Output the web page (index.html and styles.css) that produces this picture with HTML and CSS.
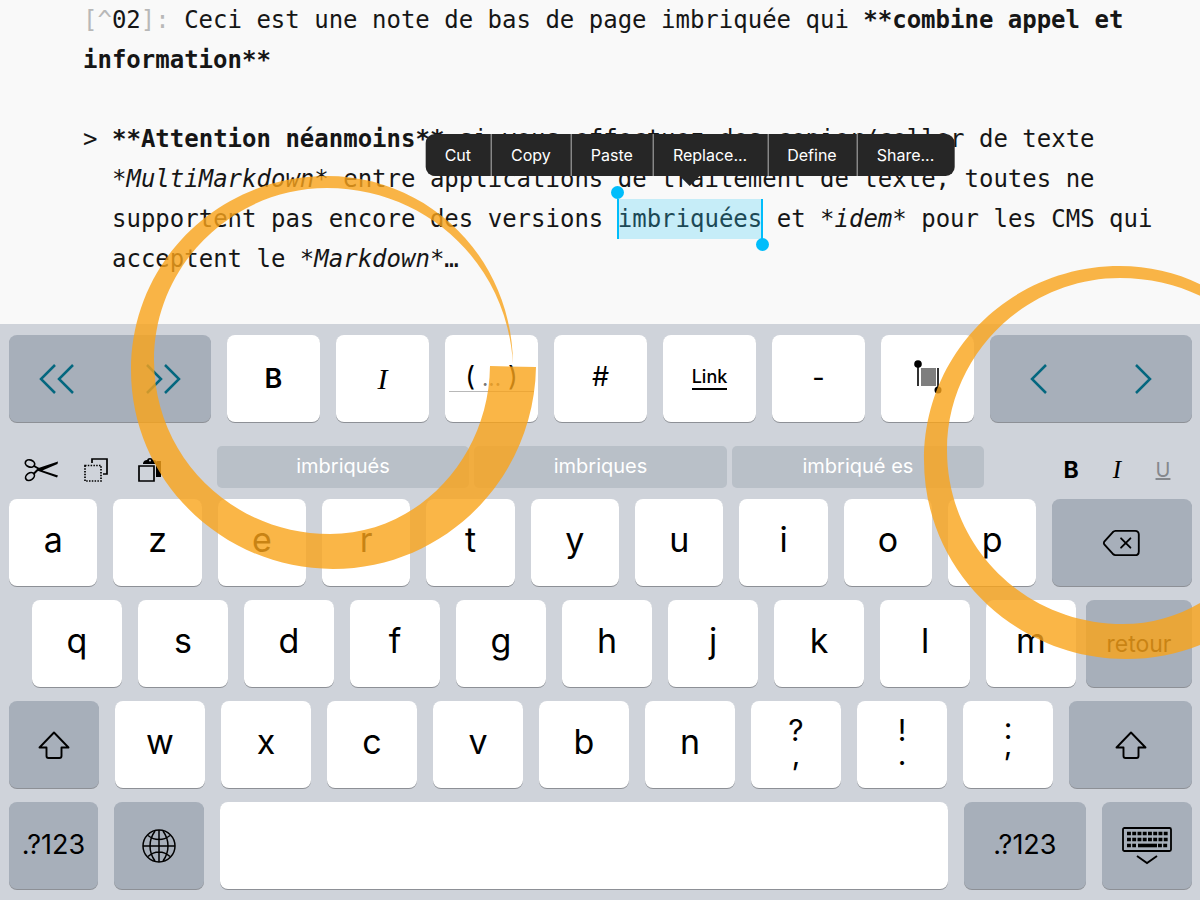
FILE: index.html
```
<!DOCTYPE html>
<html lang="fr">
<head>
<meta charset="utf-8">
<title>Éditeur Markdown</title>
<link rel="stylesheet" href="styles.css">
</head>
<body>
<main class="screen">
  <section class="editor" aria-label="Document">
    <p class="para"><span class="faint">[^</span>02<span class="faint">]:</span> Ceci est une note de bas de page imbriquée qui <strong>**combine appel et information**</strong></p>
    <div class="quote">
      <span class="mark">&gt;</span>
      <p class="para"><strong>**Attention néanmoins**</strong> si vous effectuez des copier/coller de texte <em>*MultiMarkdown*</em> entre applications de traitement de texte, toutes ne supportent pas encore des versions <span class="selection">imbriquées<span class="menu" role="toolbar"><button>Cut</button><button>Copy</button><button>Paste</button><button>Replace...</button><button>Define</button><button>Share...</button></span></span> et <em>*idem*</em> pour les CMS qui acceptent le <em>*Markdown*</em>…</p>
    </div>
  </section>

  <section class="keyboard" aria-label="Clavier">
    <div class="row row-format">
      <div class="key dark pair">
        <button aria-label="Mot précédent"><svg class="chevrons" width="36" height="32" viewBox="0 0 36 32"><path d="M16 2L2 16L16 30M34 2L20 16L34 30"/></svg></button>
        <button aria-label="Mot suivant"><svg class="chevrons" width="36" height="32" viewBox="0 0 36 32"><path d="M2 2L16 16L2 30M20 2L34 16L20 30"/></svg></button>
      </div>
      <button class="key format strong">B</button>
      <button class="key format slanted">I</button>
      <button class="key format parens"><span>(<i>...</i>)</span></button>
      <button class="key format hash">#</button>
      <button class="key format"><span class="linked">Link</span></button>
      <button class="key format">-</button>
      <button class="key" aria-label="Sélection"><svg width="30" height="36" viewBox="0 0 30 36"><path d="M5 6V28M25 10V32" stroke="#000" stroke-width="1.6"/><rect x="8" y="10" width="15" height="18" fill="#7e7e7e"/><circle cx="5" cy="6" r="3.8"/><circle cx="25" cy="32" r="3.5"/></svg></button>
      <div class="key dark pair wide">
        <button aria-label="Gauche"><svg class="chevrons" width="18" height="32" viewBox="0 0 18 32"><path d="M16 2L2 16L16 30"/></svg></button>
        <button aria-label="Droite"><svg class="chevrons" width="18" height="32" viewBox="0 0 18 32"><path d="M2 2L16 16L2 30"/></svg></button>
      </div>
    </div>

    <div class="shortcuts">
      <div class="tools tools-edit">
        <button aria-label="Couper"><svg width="36" height="24" viewBox="0 0 36 24" fill="none" stroke="#000" stroke-width="1.7"><ellipse cx="6" cy="5.5" rx="4.8" ry="3.5" transform="rotate(18 6 5.5)"/><ellipse cx="6" cy="18.5" rx="4.8" ry="3.5" transform="rotate(-35 6 18.5)"/><path d="M10 8L17 12M9.5 16L14 11.5" stroke-width="2"/><path d="M13 10.5L34 3.5L33.5 6L16 13.5ZM14 11L34 17.5L33 19.5L13 12.5Z" fill="#000" stroke="none"/></svg></button>
        <button aria-label="Copier"><svg width="26" height="26" viewBox="0 0 26 26" fill="none" stroke="#000" stroke-width="1.7"><path d="M9 6V2H24V17H20"/><path d="M2 8.5H18V24H2Z" stroke-dasharray="1.5 1.3"/></svg></button>
        <button aria-label="Coller"><svg width="26" height="26" viewBox="0 0 26 26"><path d="M6 6Q7 3 10 3Q10.500 1 13 1T16 3Q20 3 20 6V7H6ZM20 4H24V20H19V7H20Z"/><path d="M2 9H17V24H2Z" fill="none" stroke="#000" stroke-width="1.7"/><circle cx="13" cy="3.500" r="1" fill="#cfd3da"/></svg></button>
      </div>
      <div class="suggestions">
        <button>imbriqués</button><button>imbriques</button><button>imbriqué es</button>
      </div>
      <div class="tools tools-style">
        <button class="bold">B</button><button class="italic">I</button><button class="underlined">U</button>
      </div>
    </div>

    <div class="row row-top">
      <button class="key">a</button><button class="key">z</button><button class="key">e</button><button class="key">r</button><button class="key">t</button><button class="key">y</button><button class="key">u</button><button class="key">i</button><button class="key">o</button><button class="key">p</button>
      <button class="key dark icon" aria-label="Effacer"><svg width="40" height="28" viewBox="0 0 42 30" fill="none" stroke="#000" stroke-width="2" stroke-linejoin="round" stroke-linecap="round"><path d="M14 2H35Q39 2 39 6V24Q39 28 35 28H14Q12.500 28 11 26.500L2 16.500Q1 15 2 13.500L11 3.500Q12.500 2 14 2Z"/><path d="M20 10L30 20M30 10L20 20"/></svg></button>
    </div>

    <div class="home">
      <div class="row row-home">
        <button class="key">q</button><button class="key">s</button><button class="key">d</button><button class="key">f</button><button class="key">g</button><button class="key">h</button><button class="key">j</button><button class="key">k</button><button class="key">l</button><button class="key">m</button>
      </div>
      <button class="key dark label return">retour</button>
    </div>

    <div class="row row-bottom">
      <button class="key dark icon" aria-label="Majuscule"><svg width="32" height="28" viewBox="0 0 32 28" fill="none" stroke="#000" stroke-width="1.9" stroke-linejoin="round"><path d="M16 1.500L30.500 16.500H23.500V25Q23.500 27 21.500 27H10.500Q8.500 27 8.500 25V16.500H1.500Z"/></svg></button>
      <button class="key">w</button><button class="key">x</button><button class="key">c</button><button class="key">v</button><button class="key">b</button><button class="key">n</button>
      <button class="key double"><span>?</span><span>,</span></button>
      <button class="key double"><span>!</span><span>.</span></button>
      <button class="key double tight"><span>:</span><span>,</span></button>
      <button class="key dark icon" aria-label="Majuscule"><svg width="32" height="28" viewBox="0 0 32 28" fill="none" stroke="#000" stroke-width="1.9" stroke-linejoin="round"><path d="M16 1.500L30.500 16.500H23.500V25Q23.500 27 21.500 27H10.500Q8.500 27 8.500 25V16.500H1.500Z"/></svg></button>
    </div>

    <div class="row row-space">
      <button class="key dark label">.?123</button>
      <button class="key dark icon" aria-label="Langue"><svg width="34" height="34" viewBox="0 0 34 34" fill="none" stroke="#000" stroke-width="1.5"><circle cx="17" cy="17" r="16"/><path d="M17 1V33M1 17H33M13 2Q8 9 8 17T13 32M21 2Q26 9 26 17T21 32M6 6.500Q11 10.500 17 10.500T28 6.500M6 27.500Q11 23 17 23T28 27.500"/></svg></button>
      <button class="key" aria-label="Espace"></button>
      <button class="key dark label">.?123</button>
      <button class="key dark icon" aria-label="Masquer le clavier"><svg width="50" height="38" viewBox="0 0 50 38" fill="none" stroke="#000"><rect x="1" y="1" width="48" height="23" rx="1.5" stroke-width="1.8"/><path d="M5 6.500H46M5 12.500H46" stroke-width="3.6" stroke-dasharray="3.900 1.350"/><path d="M5 18.500H14M36 18.500H46" stroke-width="3.6" stroke-dasharray="3.900 1.350"/><path d="M16 18.500H35" stroke-width="3.6"/><path d="M15 29L25 36L35 29" stroke-width="1.9"/></svg></button>
    </div>
  </section>

  <svg class="rings" aria-hidden="true">
    <defs><path id="ring" d="M513 364C512 257 428 176 327 176C218 176 131 262 131 370C131 480 222 569 333 569C444 569 534 479 536 367L490 366C489 458 418 534 330 534C233 534 154 458 154 360C154 265 233 188 327 188C425 188 507 262 513 364Z"/></defs>
    <use href="#ring"/>
    <use href="#ring" x="793" y="90"/>
  </svg>
</main>
</body>
</html>
```
FILE: styles.css
```
* { box-sizing: border-box; }

body {
  margin: 0;
  background: #f9f9f9;
  color: #000;
  font-family: Inter, "Liberation Sans", sans-serif;
}

button {
  margin: 0;
  padding: 0;
  border: 0;
  background: none;
  color: inherit;
  font: inherit;
}

svg { display: block; }

.screen {
  position: relative;
  display: flex;
  flex-direction: column;
  min-height: 100vh;
  overflow: hidden;
}

/* Text area */
.editor {
  flex: 1;
  padding: 0 34px 44px 83px;
  color: #161616;
  font: 24px/40px "DejaVu Sans Mono", "Liberation Mono", monospace;
}

.para { margin: 0; }
.faint { color: #b8b8b8; }

.quote {
  display: flex;
  margin-top: 39px;
}

.mark {
  flex: none;
  width: 29px;
}

.selection {
  position: relative;
  display: inline-block;
  background: #c6edf8;
  color: #1c4956;
  box-shadow: -1px 0 #00bdfb, 1px 0 #00bdfb, inset 1px 0 #00bdfb, inset -1px 0 #00bdfb;
}

.selection::before,
.selection::after {
  content: "";
  position: absolute;
  width: 13px;
  height: 13px;
  border-radius: 50%;
  background: #00bdfb;
}

.selection::before { top: -13px; left: -7px; }
.selection::after { right: -7px; bottom: -12px; }

.menu {
  position: absolute;
  bottom: 63px;
  left: 50%;
  display: flex;
  height: 42px;
  border-radius: 9px;
  background: #262626;
  color: #fff;
  font: 16px/42px Inter, "Liberation Sans", sans-serif;
  transform: translateX(-50%);
}

.menu::after {
  content: "";
  position: absolute;
  top: 100%;
  left: 50%;
  margin-left: -10px;
  border: 10px solid transparent;
  border-top-color: #262626;
  border-bottom: 0;
}

.menu button {
  padding: 0 20px 0 19px;
  white-space: nowrap;
}

.menu button + button { border-left: 1px solid #b5b5b5; }

/* Keyboard */
.keyboard {
  display: flex;
  flex-direction: column;
  gap: 14px;
  padding: 11px 8px 11px 9px;
  background: #cfd3da;
}

.row {
  display: grid;
  gap: 16px;
}

.row-format { grid-template-columns: 202fr repeat(7, 93fr) 202fr; }
.row-top { grid-template-columns: repeat(10, 88fr) 139fr; }
.row-home { grid-template-columns: repeat(10, 1fr); flex: 1; }
.row-bottom { grid-template-columns: repeat(10, 90fr) 123fr; }
.row-space { grid-template-columns: 89fr 90fr 727fr 122fr 90fr; }

.home {
  display: flex;
  gap: 10px;
  padding-left: 23px;
}

.key {
  display: flex;
  align-items: center;
  justify-content: center;
  min-width: 0;
  height: 87px;
  padding-bottom: 6px;
  border-radius: 8px;
  background: #fff;
  box-shadow: 0 1px #8d9096;
  font-size: 34px;
}

.dark { background: #a7afba; }
.icon { padding-bottom: 0; }

.label {
  padding-bottom: 2px;
  font-size: 27px;
}

.return {
  width: 106px;
  padding-bottom: 0;
  font-size: 23px;
}

.double {
  flex-direction: column;
  padding-bottom: 6px;
  font-size: 30px;
  line-height: 24px;
}

.tight {
  padding-bottom: 17px;
  line-height: 16px;
}

.pair {
  justify-content: space-between;
  padding: 0 30px;
}

.wide { padding: 0 40px; }

.chevrons {
  fill: none;
  stroke: #04677f;
  stroke-width: 2.5;
}

.format {
  padding-bottom: 2px;
  font-size: 27px;
}

.strong {
  padding-bottom: 0;
  font-weight: 600;
}

.hash { padding-bottom: 4px; }

.slanted,
.italic {
  font-family: "Liberation Serif", serif;
  font-style: italic;
}

.slanted {
  padding-bottom: 0;
  font-size: 30px;
}

.parens span {
  padding: 0 16px;
  border-bottom: 1px solid #b8b8b8;
  line-height: 26px;
}

.parens i {
  padding: 0 7px;
  color: #777;
  font-size: 22px;
  font-style: normal;
}

.linked {
  border-bottom: 2px solid #000;
  font-size: 18px;
  font-weight: 500;
  line-height: 22px;
}

/* Strip between the two key blocks */
.shortcuts {
  display: grid;
  grid-template-columns: 208fr 768fr 208fr;
  height: 42px;
  margin: 10px 0 -3px;
}

.suggestions {
  display: grid;
  grid-template-columns: repeat(3, 1fr);
  gap: 5px;
}

.suggestions button {
  padding-bottom: 2px;
  border-radius: 5px;
  background: #b9c0c8;
  color: #fff;
  font-size: 20px;
}

.tools {
  display: flex;
  align-items: center;
  padding-top: 6px;
}

.tools button {
  display: flex;
  justify-content: center;
}

.tools-edit { padding-left: 6px; }
.tools-edit button { width: 54px; }

.tools-style {
  justify-content: flex-end;
  padding-right: 6px;
  font-size: 23px;
}

.tools-style button { width: 46px; }
.bold { font-weight: 700; }
.tools-style .italic { font-size: 25px; }

.underlined {
  color: #85888d;
  font-size: 20px;
  text-decoration: underline;
}

/* Hand-drawn highlights over the screen */
.rings {
  position: absolute;
  inset: 0;
  width: 100%;
  height: 100%;
  fill: #faa41a;
  opacity: 0.8;
  pointer-events: none;
}
```
